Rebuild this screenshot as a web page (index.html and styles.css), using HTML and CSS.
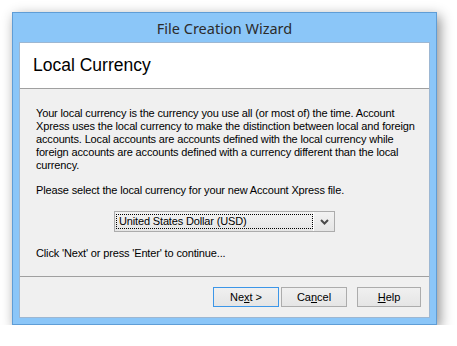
FILE: index.html
```html
<!DOCTYPE html>
<html lang="en">
<head>
  <meta charset="UTF-8">
  <meta name="viewport" content="width=device-width, initial-scale=1.0">
  <title>File Creation Wizard</title>
  <link rel="stylesheet" href="styles.css">
</head>
<body>
  <div class="window">
    <div class="titlebar">File Creation Wizard</div>

    <div class="client">
      <div class="header">Local Currency</div>

      <div class="content">
        <p class="intro">Your local currency is the currency you use all (or most of) the time. Account Xpress uses the local currency to make the distinction between local and foreign accounts. Local accounts are accounts defined with the local currency while foreign accounts are accounts defined with a currency different than the local currency.</p>
        <p class="prompt">Please select the local currency for your new Account Xpress file.</p>

        <div class="combo">
          <div class="combo-value"><span>United States Dollar (USD)</span></div>
          <div class="combo-arrow">
            <svg width="9" height="6" viewBox="0 0 9 6"><path d="M1 1 L4.5 4.5 L8 1" fill="none" stroke="#4a4a4a" stroke-width="2"/></svg>
          </div>
        </div>

        <p class="hint">Click 'Next' or press 'Enter' to continue...</p>
      </div>

      <div class="footer">
        <button class="btn default">Ne<u>x</u>t &gt;</button>
        <button class="btn">Ca<u>n</u>cel</button>
        <button class="btn help"><u>H</u>elp</button>
      </div>
    </div>
  </div>
</body>
</html>
```

FILE: styles.css
```css
body { margin: 0; background: #fff; font-family: "Liberation Sans", Arial, sans-serif; font-size: 11px; letter-spacing: -0.15px; color: #000; }

.window { margin: 12px 0 0 12px; width: 411px; height: 305px; border: 1px solid #5f9dd6; background: #8bc6f8; box-shadow: 3px 4px 12px rgba(0,0,0,0.45); padding: 0 6px 6px 6px; display: flex; flex-direction: column; }
.titlebar { height: 29px; line-height: 30px; text-align: center; font-family: "Noto Sans", "Open Sans", sans-serif; font-size: 14.5px; letter-spacing: 0; color: #2b2b2b; }

.client { flex: 1; border: 1px solid #9db7d2; background: #f0f0f0; display: flex; flex-direction: column; }
.header { height: 45px; line-height: 45px; padding-left: 13px; background: #fff; border-bottom: 1px solid #a0a0a0; font-size: 17.5px; letter-spacing: 0; }

.content { flex: 1; padding: 18px 10px 0 16px; border-bottom: 1px solid #a0a0a0; }
.content p { margin: 0; line-height: 13px; }
.prompt { margin-top: 12px !important; }
.hint { margin-top: 15px !important; }

.combo { margin: 14px 0 0 78px; width: 219px; height: 19px; border: 1px solid #acacac; background: linear-gradient(#f2f2f2, #e5e5e5); display: flex; }
.combo-value { flex: 1; padding: 2px 0 2px 1px; }
.combo-value span { display: block; height: 13px; line-height: 13px; padding: 0 2px; border: 1px dotted #000; }
.combo-arrow { width: 20px; display: flex; align-items: center; justify-content: center; border-left: 1px solid #fff; }

.footer { height: 40px; display: flex; align-items: center; padding-left: 193px; }
.btn { width: 66px; height: 20px; margin: 0 2px 0 0; padding: 0; border: 1px solid #acacac; background: linear-gradient(#f0f0f0, #e5e5e5); font-family: "Liberation Sans", Arial, sans-serif; font-size: 11px; letter-spacing: 0; color: #000; }
.btn.default { border-color: #3c96e8; }
.btn.help { margin-left: 8px; width: 64px; }
```
